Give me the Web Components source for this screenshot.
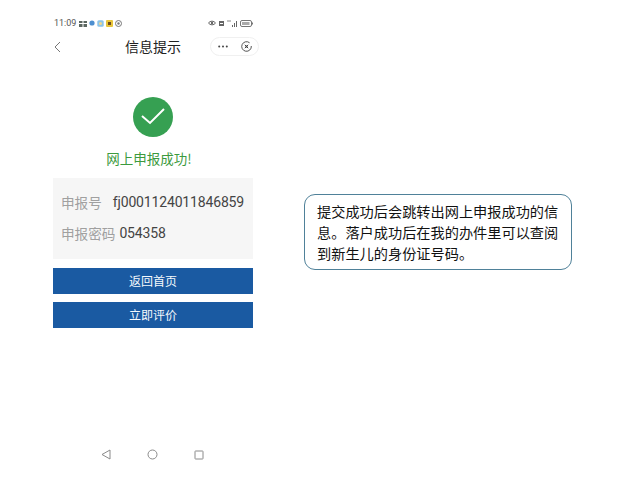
<!DOCTYPE html>
<html lang="zh"><head><meta charset="utf-8"><title>信息提示</title>
<style>
html,body{margin:0;padding:0;background:#fff;}
body{width:619px;height:496px;overflow:hidden;font-family:"Noto Sans CJK SC","Noto Sans",sans-serif;}
main{display:flex;align-items:flex-start;padding-left:45px;gap:39px;}
</style></head><body>
<main>
<phone-screen>
  <status-bar></status-bar>
  <nav-bar title="信息提示"></nav-bar>
  <success-panel>网上申报成功!</success-panel>
  <info-card>
    <info-row label="申报号" gap="11">fj0001124011846859</info-row>
    <info-row label="申报密码" gap="4">054358</info-row>
  </info-card>
  <action-button>返回首页</action-button>
  <action-button>立即评价</action-button>
  <nav-keys></nav-keys>
</phone-screen>
<call-out>提交成功后会跳转出网上申报成功的信息。落户成功后在我的办件里可以查阅到新生儿的身份证号码。</call-out>
</main>
<script>
function def(name,html,init){
  customElements.define(name,class extends HTMLElement{
    constructor(){super();this.attachShadow({mode:'open'}).innerHTML=html;}
    connectedCallback(){if(init)init(this);}
  });
}
def('phone-screen',`<style>:host{display:flex;flex-direction:column;width:220px;height:496px;flex:none}</style><slot></slot>`);
def('status-bar',`<style>
:host{display:flex;align-items:center;height:12px;margin-top:17px;padding:0 12px 0 9px;color:#555;font:9px/12px "Roboto",sans-serif}
span{margin-right:3px}
.g{display:flex;align-items:center;gap:2px}
.r{margin-left:auto;gap:2px}
svg{display:block}
</style>
<span>11:09</span>
<div class="g">
<svg width="8" height="7" viewBox="0 0 8 7"><path d="M0 1h3.5v2H0zM4.5 1H8v2H4.5zM0 4h3.5v3H0zM4.5 4H8v3H4.5z" fill="#5b6660"/></svg>
<svg width="6" height="6" viewBox="0 0 6 6"><circle cx="3" cy="3" r="2.6" fill="#4d8fd0"/></svg>
<svg width="7" height="7" viewBox="0 0 7 7"><rect x=".3" y=".3" width="6.4" height="6.4" rx="1.5" fill="#8cc4e8"/><circle cx="3.5" cy="3.5" r="1.5" fill="#f0d890"/></svg>
<svg width="7" height="7" viewBox="0 0 7 7"><rect width="7" height="7" rx="1" fill="#e8c53a"/><rect x="2" y="2" width="3" height="3" fill="#6b4a20"/></svg>
<svg width="7" height="7" viewBox="0 0 7 7"><circle cx="3.5" cy="3.5" r="3" fill="none" stroke="#777"/><circle cx="3.5" cy="3.5" r="1.2" fill="#777"/></svg>
</div>
<div class="g r">
<svg width="8" height="6" viewBox="0 0 8 6"><path d="M.5 3C2 .6 6 .6 7.5 3 6 5.4 2 5.4.5 3z" fill="none" stroke="#666"/><circle cx="4" cy="3" r="1.2" fill="#666"/></svg>
<svg width="7" height="7" viewBox="0 0 7 7"><path d="M1 1h5v5H1z" fill="#666"/><path d="M2 3.5h3" stroke="#fff"/></svg>
<svg width="11" height="7" viewBox="0 0 11 7"><path d="M1 2V0M3 2V0" stroke="#888"/><path d="M5 7V5h1v2zM7 7V3h1v4zM9 7V1h1v6z" fill="#666"/></svg>
<svg width="13" height="7" viewBox="0 0 13 7"><rect x=".5" y=".5" width="11" height="6" rx="1.5" fill="#fff" stroke="#777"/><rect x="2" y="2" width="7.5" height="3" fill="#aaa"/><rect x="12" y="2.5" width="1" height="2" fill="#777"/></svg>
</div>`);
def('nav-bar',`<style>
:host{display:flex;align-items:center;justify-content:space-between;height:19px;margin-top:8px;padding:0 6px 0 9px;position:relative}
h1{margin:0;position:absolute;left:80px;top:-2px;font:400 14px/22px "Noto Sans CJK SC",sans-serif;color:#222}
.cap{display:flex;align-items:center;justify-content:space-between;box-sizing:border-box;width:49px;height:19px;border:1px solid #f0f0f0;border-radius:10px;padding:0 6px 0 7px}
svg{display:block}
</style>
<svg width="7" height="12" viewBox="0 0 7 12"><path d="M6 1 1 6l5 5" fill="none" stroke="#777" stroke-width="1"/></svg>
<h1></h1>
<div class="cap">
<svg width="10" height="3" viewBox="0 0 10 3"><circle cx="1.2" cy="1.5" r="1" fill="#444"/><circle cx="5" cy="1.5" r="1" fill="#444"/><circle cx="8.8" cy="1.5" r="1" fill="#444"/></svg>
<svg width="11" height="11" viewBox="0 0 11 11"><path d="M8.6 1.8A4.8 4.8 0 1 0 10.3 5" fill="none" stroke="#555"/><path d="M3.8 3.8l3.4 3.4M7.2 3.8 3.8 7.2" stroke="#444"/><circle cx="5.5" cy="5.5" r="1" fill="#444"/></svg>
</div>`,el=>{el.shadowRoot.querySelector('h1').textContent=el.getAttribute('title');el.removeAttribute('title');});
def('success-panel',`<style>
:host{display:flex;flex-direction:column;align-items:center;margin-top:41px;padding-right:4px;color:#3c9a3e;font:400 13.5px/20px "Noto Sans CJK SC",sans-serif}
svg{display:block;margin-bottom:11px}
div{margin-right:8px}
</style>
<svg width="40" height="40" viewBox="0 0 40 40"><circle cx="20" cy="20" r="20" fill="#36a052"/><path d="M9 19l8 7 14-14" fill="none" stroke="#fff" stroke-width="2"/></svg>
<div><slot></slot></div>`);
def('info-card',`<style>
:host{display:flex;flex-direction:column;gap:10px;margin:10px 12px 1px 8px;padding:14px 8px 15px;background:#f6f6f6}
</style><slot></slot>`);
def('info-row',`<style>
:host{display:flex;align-items:center;height:21px;font:400 13.6px/21px "Noto Sans CJK SC",sans-serif;color:#a0a0a0;white-space:nowrap}
b{font:400 14px/21px "Roboto",sans-serif;letter-spacing:-.16px;color:#444}
</style><span></span><b><slot></slot></b>`,el=>{
  const s=el.shadowRoot.querySelector('span');s.textContent=el.getAttribute('label');s.style.marginRight=el.getAttribute('gap')+'px';
});
def('action-button',`<style>
:host{display:flex;align-items:center;justify-content:center;height:26px;margin:8px 12px 0 8px;background:#1a5aa2;color:#f4f8fc;font:400 12px/26px "Noto Sans CJK SC",sans-serif}
</style><slot></slot>`);
def('nav-keys',`<style>
:host{display:flex;align-items:center;gap:36px;margin-top:121px;padding-left:56px}
svg{display:block}
</style>
<svg width="10" height="11" viewBox="0 0 10 11"><path d="M9 1v9L1 5.5z" fill="none" stroke="#8a8a8a"/></svg>
<svg width="11" height="11" viewBox="0 0 11 11"><circle cx="5.5" cy="5.5" r="4.5" fill="none" stroke="#8a8a8a"/></svg>
<svg width="10" height="10" viewBox="0 0 10 10"><rect x="1" y="1" width="8" height="8" rx=".5" fill="none" stroke="#8a8a8a"/></svg>`);
def('call-out',`<style>
:host{display:block;box-sizing:border-box;width:268px;height:76px;margin-top:194px;padding:6px 10px 6px 12px;border:1px solid #4f8199;border-radius:11px;background:#fff;color:#111;font:400 14.2px/21px "Noto Sans CJK SC",sans-serif}
</style><slot></slot>`);
</script>
</body></html>
